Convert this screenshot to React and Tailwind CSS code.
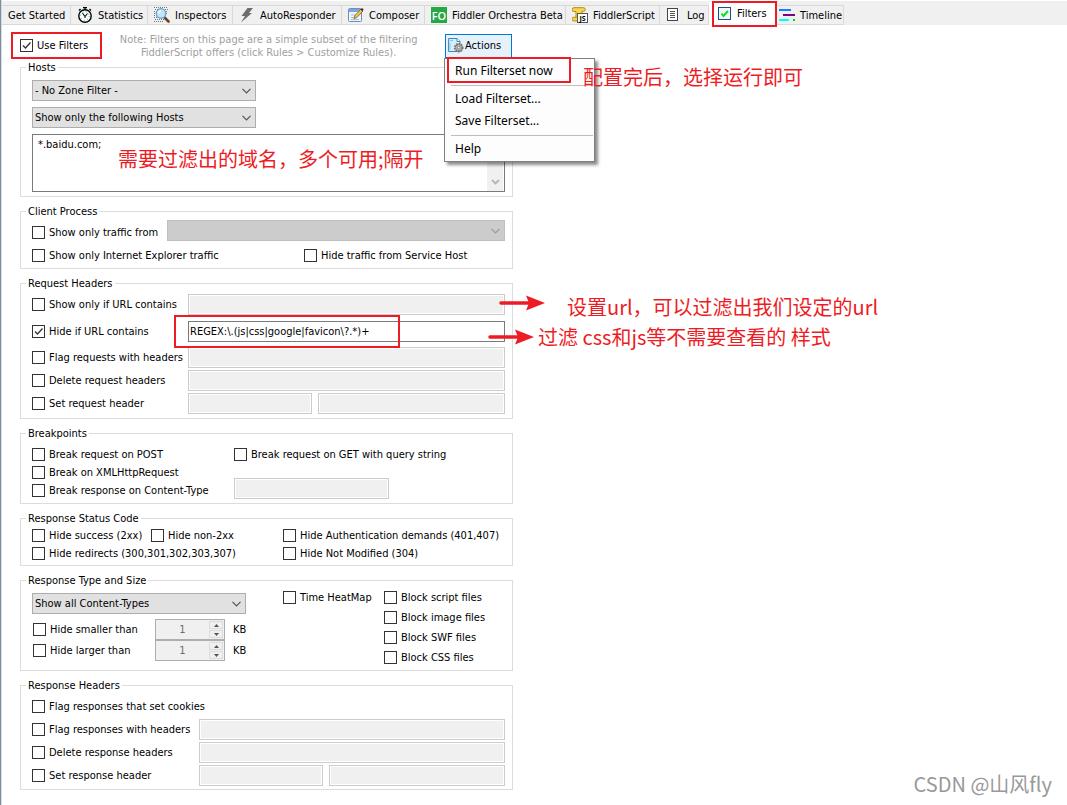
import { useState } from 'react';
import clsx from 'clsx';

const StopwatchIcon = () => (
  <svg width="16" height="16" viewBox="0 0 16 16" className="shrink-0">
    <path d="M6 0.5h4M8 1v2M12.5 2l1.5 1.5M3.5 2L2 3.500" stroke="#000" strokeWidth="1.300" fill="none" />
    <circle cx="8" cy="9" r="6.200" fill="#fff" stroke="#000" strokeWidth="1.400" />
    <circle cx="8" cy="9" r="4.300" fill="none" stroke="#2aa5a5" strokeWidth="1" strokeDasharray="1 2.400" />
    <path d="M5.500 6L8 9.500L10.500 6.500M8 9.500V11" stroke="#111" strokeWidth="1.100" fill="none" />
  </svg>
);

const MagnifierIcon = () => (
  <svg width="16" height="16" viewBox="0 0 16 16" className="shrink-0">
    <path
      d="M0 0.500h14M1 2.500h13M0 4.500h3M12 4.500h2M0 6.500h2M12 6.500h2M0 8.500h3M0 10.500h9M1 12.500h9M0 14.500h10"
      stroke="#777"
      strokeWidth="1"
      strokeDasharray="1 1"
    />
    <path d="M10.500 10.500L14.500 14.500" stroke="#6b4226" strokeWidth="2.600" strokeLinecap="round" />
    <circle cx="7" cy="6.500" r="4.700" fill="#bfe6fb" stroke="#6fa6cf" strokeWidth="1.400" />
    <path d="M4.500 6.500a2.500 2.500 0 0 1 2.500-2.500" stroke="#fff" strokeWidth="1.400" fill="none" />
  </svg>
);

const BoltIcon = () => (
  <svg width="16" height="16" viewBox="0 0 16 16" className="shrink-0">
    <path d="M8.500 1H14L10 6h3L2 15.500L6 9H2.500Z" fill="#6e6e6e" />
  </svg>
);

const ComposeIcon = () => (
  <svg width="16" height="16" viewBox="0 0 16 16" className="shrink-0">
    <rect x="0.500" y="1.500" width="13" height="13" rx="1" fill="#eef4fb" stroke="#6c8fbd" />
    <rect x="1" y="2" width="12" height="3" fill="#7fa6d8" />
    <path d="M3 8h6M3 10.500h4M3 12.500h8" stroke="#a9bdd6" />
    <path d="M6 11.500l1-3L13 2l2 2-6.200 6.500z" fill="#f3c64b" stroke="#7a5a1c" strokeWidth="0.800" />
    <path d="M12.500 2.500L14 1l1.700 1.600L14.300 4.200z" fill="#333" />
  </svg>
);

const OrchestraIcon = () => (
  <span className="flex size-4 shrink-0 items-center justify-center bg-[#28a745] font-['Open_Sans',sans-serif] text-[11px] font-semibold text-white">
    FO
  </span>
);

const ScriptIcon = () => (
  <svg width="16" height="16" viewBox="0 0 16 16" className="shrink-0">
    <path
      d="M2 0.700h9.500a1.800 1.800 0 0 1 0 3.600H10v6H4V4.500H2a1.900 1.900 0 0 1 0-3.800Z"
      fill="#f7d64a"
      stroke="#b58a14"
      strokeWidth="1"
    />
    <path d="M4 10.300H1.800a1.700 1.700 0 0 0 0 3.700H7" fill="#f7d64a" stroke="#b58a14" />
    <rect x="5.500" y="6.500" width="10" height="9" fill="#fff" stroke="#555" />
    <text x="10.500" y="14" textAnchor="middle" fontSize="7" fontWeight="700" fontFamily="Open Sans">
      JS
    </text>
  </svg>
);

const LogIcon = () => (
  <svg width="16" height="16" viewBox="0 0 16 16" className="shrink-0">
    <rect x="1.500" y="1.500" width="10" height="12" fill="#fff" stroke="#444" />
    <path d="M4 4.500h5M4 6.500h5M4 8.500h5M4 10.500h5" stroke="#555" />
  </svg>
);

const FiltersIcon = () => (
  <svg width="14" height="14" viewBox="0 0 14 14" className="shrink-0">
    <rect x="0.500" y="0.500" width="12" height="12" fill="#f4f8fb" stroke="#1c5180" />
    <path d="M3.500 6.500L5.500 9L10 4" stroke="#00e61a" strokeWidth="2" fill="none" />
  </svg>
);

const TimelineIcon = () => (
  <svg width="16" height="16" viewBox="0 0 16 16" className="shrink-0">
    <path d="M0 3h12" stroke="#0a84ff" strokeWidth="2" />
    <path d="M4 8h12" stroke="#800080" strokeWidth="2" />
    <path d="M0 13h10" stroke="#00ffff" strokeWidth="2" />
    <path d="M14 13h2" stroke="#00e000" strokeWidth="2" />
  </svg>
);

const ActionsIcon = () => (
  <svg width="16" height="16" viewBox="0 0 16 16" className="shrink-0">
    <path d="M0.600 1.500h8.400l3 3v10H0.600z" fill="#d9edf9" stroke="#3b86b5" />
    <path d="M9 1.500v3h3" fill="#fff" stroke="#3b86b5" />
    <path d="M2 3.500h3M2 12.500V6" stroke="#8cc4e6" />
    <circle cx="10.700" cy="10.700" r="4" fill="#b5b5b5" stroke="#6b6b6b" strokeWidth="1.600" strokeDasharray="1.600 1" />
    <circle cx="10.700" cy="10.700" r="3" fill="#c8c8c8" stroke="#777" strokeWidth="0.800" />
    <circle cx="10.700" cy="10.700" r="1.300" fill="#fff" stroke="#666" strokeWidth="0.800" />
  </svg>
);

const tabs = [
  { name: 'Get Started', width: 'w-[69px]' },
  { name: 'Statistics', icon: StopwatchIcon, width: 'w-[77px]' },
  { name: 'Inspectors', icon: MagnifierIcon, width: 'w-[85px]' },
  { name: 'AutoResponder', icon: BoltIcon, width: 'w-[109px]' },
  { name: 'Composer', icon: ComposeIcon, width: 'w-[83px]' },
  { name: 'Fiddler Orchestra Beta', icon: OrchestraIcon, width: 'w-[141px]' },
  { name: 'FiddlerScript', icon: ScriptIcon, width: 'w-[94px]' },
  { name: 'Log', icon: LogIcon, width: 'w-[49px]' },
  { name: 'Filters', icon: FiltersIcon, width: 'w-[68px]' },
  { name: 'Timeline', icon: TimelineIcon, width: 'w-[67px]' },
];

function TabBar() {
  const [active, setActive] = useState('Filters');

  return (
    <nav className="flex h-[25px] items-end border-t border-white bg-[#f0f0f0]">
      {tabs.map(({ name, icon: Icon, width }) => (
        <button
          key={name}
          onClick={() => setActive(name)}
          className={clsx(
            'relative flex shrink-0 items-center gap-[5px] border-r border-[#d9d9d9] whitespace-nowrap',
            width,
            name === active ? 'h-[23px] bg-white pl-[9px]' : 'h-5 border-y',
            name === 'Timeline' ? 'pl-[2px]' : name !== active && 'pl-[6px]'
          )}
        >
          {Icon && <Icon />}
          {name}
          {name === 'Filters' && <RedBox className="-top-px -right-px -bottom-[2px] left-[3px]" />}
        </button>
      ))}
    </nav>
  );
}

function RedBox({ className }) {
  return <span className={clsx('pointer-events-none absolute z-20 border-2 border-[#ed1c24]', className)} />;
}

function Note({ className, children }) {
  return (
    <p
      className={clsx(
        "pointer-events-none absolute z-20 font-['Noto_Sans_CJK_SC',sans-serif] text-xl/6 whitespace-nowrap text-[#ed1c24]",
        className
      )}
    >
      {children}
    </p>
  );
}

function Arrow({ className }) {
  return (
    <svg width="48" height="16" viewBox="0 0 48 16" className={clsx('pointer-events-none absolute z-20', className)}>
      <path d="M3 8h29" stroke="#ed1c24" strokeWidth="3.500" strokeLinecap="round" />
      <path d="M28 0.500L47 8L28 15.500L31 8Z" fill="#ed1c24" />
    </svg>
  );
}

function Check({ label, className, defaultChecked }) {
  return (
    <label className={clsx('flex h-[18px] items-center gap-1 whitespace-nowrap', className)}>
      <span className="relative size-[13px] shrink-0">
        <input
          type="checkbox"
          defaultChecked={defaultChecked}
          className="peer block size-[13px] appearance-none border border-[#333] bg-white"
        />
        <svg viewBox="0 0 13 13" className="pointer-events-none absolute inset-0 hidden peer-checked:block">
          <path d="M3 6.500L5.500 9L10.500 3.500" stroke="#333" strokeWidth="1.300" fill="none" />
        </svg>
      </span>
      {label}
    </label>
  );
}

function Group({ title, className, children }) {
  return (
    <fieldset className={clsx('relative border border-[#dcdcdc] pr-[7px] pl-[11px]', className)}>
      <legend className="-ml-[6px] h-[14px] px-[2px] leading-[15px]">{title}</legend>
      {children}
    </fieldset>
  );
}

function Dropdown({ label, option, className, disabled }) {
  return (
    <div className={clsx('relative h-[21px]', className)}>
      <select
        aria-label={label}
        disabled={disabled}
        className="block h-full w-full appearance-none border border-[#adadad] bg-[#e1e1e1] pl-[2px] disabled:border-[#bfbfbf] disabled:bg-[#ccc] disabled:opacity-100"
      >
        <option>{option}</option>
      </select>
      <svg
        width="9"
        height="6"
        viewBox="0 0 9 6"
        className="pointer-events-none absolute top-2 right-[5px]"
      >
        <path d="M0.500 0.800L4.500 4.800L8.500 0.800" stroke={disabled ? '#999' : '#555'} strokeWidth="1.200" fill="none" />
      </svg>
    </div>
  );
}

function Field({ label, className, ...props }) {
  return (
    <input
      type="text"
      aria-label={label}
      className={clsx(
        'block h-[21px] min-w-0 border border-[#7a7a7a] bg-white px-px disabled:border-[#ccc] disabled:bg-[#f0f0f0] disabled:shadow-[inset_0_0_0_1px_#fff]',
        className
      )}
      {...props}
    />
  );
}

function Spinner({ label }) {
  return (
    <div className="flex h-[21px] w-[70px] border border-[#abadb3] bg-[#f0f0f0]">
      <input
        type="text"
        aria-label={label}
        defaultValue="1"
        disabled
        className="w-[53px] text-center text-[#6d6d6d]"
      />
      <span className="flex w-[14px] flex-col gap-px py-px">
        <button disabled aria-label="Increase" className="flex flex-1 items-center justify-center border border-[#dcdcdc]">
          <svg width="5" height="3" viewBox="0 0 5 3">
            <path d="M0 3L2.500 0L5 3Z" fill="#555" />
          </svg>
        </button>
        <button disabled aria-label="Decrease" className="flex flex-1 items-center justify-center border border-[#dcdcdc]">
          <svg width="5" height="3" viewBox="0 0 5 3">
            <path d="M0 0L2.500 3L5 0Z" fill="#555" />
          </svg>
        </button>
      </span>
    </div>
  );
}

function ActionsMenu() {
  const item = 'block h-[22px] w-full pl-[10px] text-left hover:bg-[#e5f1fb]';
  return (
    <div className="absolute top-6 -left-px z-10 w-[151px] border border-[#808080] bg-[#fdfdfd] pt-px pb-px font-['Noto_Sans',sans-serif] text-xs shadow-[3px_3px_3px_rgba(0,0,0,0.45)]">
      <button className={item}>Run Filterset now</button>
      <hr className="mr-px ml-[6px] mt-[3px] mb-[2px] border-[#bdbdbd]" />
      <button className={item}>Load Filterset...</button>
      <button className={item}>Save Filterset...</button>
      <hr className="mr-px ml-[6px] mt-[3px] mb-[2px] border-[#bdbdbd]" />
      <button className={item}>Help</button>
      <RedBox className="-top-[2px] left-[2px] h-[26px] w-[124px]" />
      <Note className="top-[6px] left-[138px]">配置完后，选择运行即可</Note>
    </div>
  );
}

export default function App() {
  return (
    <div className="relative min-h-screen border-l border-[#7b8ea3] bg-white font-['DejaVu_Sans_Condensed','Noto_Sans',sans-serif] text-[11px]/[13px] text-black">
      <div className="min-h-screen border-l border-[#d9d9d9]">
        <TabBar />

        <main className="flex max-w-[511px] flex-col gap-[7px] pb-[15px] pl-[18px]">
          <header className="relative -mb-[7px] flex h-[35px] items-start">
            <Check label="Use Filters" defaultChecked className="mt-[11px]" />
            <RedBox className="top-[7px] -left-[9px] h-[27px] w-[91px]" />
            <p className="grow pt-2 pl-1 text-center text-[#a0a0a0]">
              Note: Filters on this page are a simple subset of the filtering
              <br />
              FiddlerScript offers (click Rules &gt; Customize Rules).
            </p>
            <div className="relative mt-[9px] mr-px">
              <button className="flex h-6 w-[67px] items-center gap-px border border-[#0078d7] bg-[#e5f1fb] pb-[2px] pl-[2px]">
                <ActionsIcon />
                Actions
              </button>
              <ActionsMenu />
            </div>
          </header>

          <Group title="Hosts" className="pt-[6px] pb-1">
            <Dropdown label="Zone filter" option="- No Zone Filter -" className="mb-[6px] w-[224px]" />
            <Dropdown label="Host filter" option="Show only the following Hosts" className="mb-[6px] w-[224px]" />
            <div className="relative">
              <textarea
                aria-label="Hosts"
                defaultValue="*.baidu.com;"
                className="block h-[58px] w-full resize-none overflow-hidden border border-[#7a7a7a] px-[5px] py-[3px]"
              />
              <span className="absolute top-px right-[2px] bottom-px flex w-4 items-end justify-center bg-[#f0f0f0] pb-[6px]">
                <svg width="9" height="6" viewBox="0 0 9 6">
                  <path d="M1 1L4.500 4.500L8 1" stroke="#b5b5b5" strokeWidth="1.800" fill="none" />
                </svg>
              </span>
              <Note className="top-[13px] left-[86px]">需要过滤出的域名，多个可用;隔开</Note>
            </div>
          </Group>

          <Group title="Client Process" className="pt-[2px] pb-1">
            <div className="flex items-end justify-between">
              <Check label="Show only traffic from" />
              <Dropdown label="Process" option="" disabled className="w-[338px]" />
            </div>
            <div className="mt-[5px] flex">
              <Check label="Show only Internet Explorer traffic" className="w-[272px]" />
              <Check label="Hide traffic from Service Host" />
            </div>
          </Group>

          <Group title="Request Headers" className="pt-1 pb-1">
            <div className="grid grid-cols-[156px_1fr] items-center">
              <Check label="Show only if URL contains" className="mb-[6px]" />
              <Field label="Show URL" disabled className="mb-[6px]" />
              <Check label="Hide if URL contains" defaultChecked className="mb-[5px]" />
              <Field label="Hide URL" defaultValue="REGEX:\.(js|css|google|favicon\?.*)+" className="mb-[5px]" />
              <Check label="Flag requests with headers" className="mb-[2px]" />
              <Field label="Flag headers" disabled className="mb-[2px]" />
              <Check label="Delete request headers" className="mb-[2px]" />
              <Field label="Delete headers" disabled className="mb-[2px]" />
              <Check label="Set request header" />
              <div className="flex gap-[6px]">
                <Field label="Request header name" disabled className="w-[124px]" />
                <Field label="Request header value" disabled className="flex-1" />
              </div>
            </div>
            <RedBox className="top-[25px] left-[153px] h-[33px] w-[226px]" />
            <Arrow className="top-[5px] left-[477px]" />
            <Arrow className="top-[39px] left-[466px]" />
            <Note className="top-[5px] left-[546px]">设置url，可以过滤出我们设定的url</Note>
            <Note className="top-[35px] left-[517px]">过滤 css和js等不需要查看的 样式</Note>
          </Group>

          <Group title="Breakpoints" className="pt-[5px] pb-1">
            <div className="grid grid-cols-[202px_1fr]">
              <div>
                <Check label="Break request on POST" />
                <Check label="Break on XMLHttpRequest" />
                <Check label="Break response on Content-Type" />
              </div>
              <div className="flex flex-col justify-between">
                <Check label="Break request on GET with query string" />
                <Field label="Content-Type" disabled className="w-[155px]" />
              </div>
            </div>
          </Group>

          <Group title="Response Status Code" className="pt-px pb-[3px]">
            <div className="grid grid-cols-[119px_132px_1fr]">
              <Check label="Hide success (2xx)" />
              <Check label="Hide non-2xx" />
              <Check label="Hide Authentication demands (401,407)" />
              <Check label="Hide redirects (300,301,302,303,307)" className="col-span-2" />
              <Check label="Hide Not Modified (304)" />
            </div>
          </Group>

          <Group title="Response Type and Size" className="pt-px pb-1">
            <div className="grid grid-cols-[251px_101px_1fr]">
              <div className="pt-[5px]">
                <Dropdown label="Content types" option="Show all Content-Types" className="mb-[5px] w-[214px]" />
                <div className="flex items-center pl-px">
                  <Check label="Hide smaller than" className="w-[122px]" />
                  <Spinner label="Smaller than" />
                  <span className="pl-2">KB</span>
                </div>
                <div className="flex items-center pl-px">
                  <Check label="Hide larger than" className="w-[122px]" />
                  <Spinner label="Larger than" />
                  <span className="pl-2">KB</span>
                </div>
              </div>
              <Check label="Time HeatMap" />
              <div className="flex flex-col gap-[2px]">
                <Check label="Block script files" />
                <Check label="Block image files" />
                <Check label="Block SWF files" />
                <Check label="Block CSS files" />
              </div>
            </div>
          </Group>

          <Group title="Response Headers" className="pt-[5px] pb-[3px]">
            <Check label="Flag responses that set cookies" className="mb-1" />
            <div className="grid grid-cols-[167px_1fr] items-center gap-y-[2px]">
              <Check label="Flag responses with headers" />
              <Field label="Flag response headers" disabled />
              <Check label="Delete response headers" />
              <Field label="Delete response headers" disabled />
              <Check label="Set response header" />
              <div className="flex gap-[6px]">
                <Field label="Response header name" disabled className="w-[124px]" />
                <Field label="Response header value" disabled className="flex-1" />
              </div>
            </div>
          </Group>
        </main>
      </div>

      <p className="absolute right-[15px] bottom-[9px] font-['Noto_Sans_CJK_SC',sans-serif] text-xl/6 text-[#999]">
        CSDN @山风fly
      </p>
    </div>
  );
}
